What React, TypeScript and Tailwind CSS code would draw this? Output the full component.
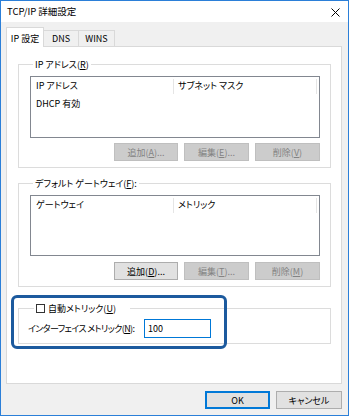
import React from 'react';

type BtnProps = {
  children: React.ReactNode;
  disabled?: boolean;
  isDefault?: boolean;
  width?: 'w-[64px]' | 'w-[65px]' | 'w-[66px]';
};

function WinButton({ children, disabled, isDefault, width = 'w-[65px]' }: BtnProps) {
  const base = 'flex h-[18px] items-center justify-center whitespace-nowrap leading-none';
  const look = disabled
    ? 'border border-[#bfbfbf] bg-[#cccccc] text-[#838383]'
    : isDefault
      ? 'border-2 border-[#0078d7] bg-[#e1e1e1]'
      : 'border border-[#adadad] bg-[#e1e1e1]';
  return <div className={`${base} ${look} ${width}`}>{children}</div>;
}

function ListHeader({ left, right }: { left: string; right: string }) {
  return (
    <div className="flex h-[18px] items-center">
      <div className="flex h-full w-[143px] items-center justify-between pl-[5px]">
        <span>{left}</span>
        <span className="h-[15px] w-px bg-[#e5e5e5]" />
      </div>
      <div className="flex h-full w-[143px] items-center justify-between pl-[4px]">
        <span>{right}</span>
        <span className="h-[15px] w-px bg-[#e5e5e5]" />
      </div>
    </div>
  );
}

export default function App() {
  const groupClass = 'border border-[#dcdcdc] pl-[11px] pr-[10px]';

  return (
    <div className="relative flex h-[416px] w-[349px] flex-col border border-[#2b7fd8] bg-[#f0f0f0] font-['Noto_Sans_CJK_JP','Noto_Sans',sans-serif] text-[9px] text-black [font-feature-settings:'palt']">
      {/* タイトルバー */}
      <div className="flex h-[21px] items-center justify-between bg-white pl-[6px] pr-[8px]">
        <span className="text-[9.5px]">TCP/IP 詳細設定</span>
        <svg width="9" height="9" viewBox="0 0 9 9" className="mt-px">
          <path d="M0.5 0.5 L8.5 8.5 M8.5 0.5 L0.5 8.5" stroke="#000" strokeWidth="1" />
        </svg>
      </div>

      <div className="flex flex-1 flex-col pl-[5px] pr-[6px] pt-[5px]">
        {/* タブ */}
        <div className="flex h-[19px] items-end">
          <div className="relative z-10 -mb-px flex h-[20px] w-[38px] items-center justify-center border-x border-t border-[#d9d9d9] bg-white pt-[2px]">
            IP 設定
          </div>
          <div className="flex h-[16px] w-[35px] items-center justify-center border-r border-t border-[#d9d9d9] bg-[#f0f0f0] pt-px">
            DNS
          </div>
          <div className="flex h-[16px] w-[36px] items-center justify-center border-r border-t border-[#d9d9d9] bg-[#f0f0f0] pt-px">
            WINS
          </div>
        </div>

        {/* タブの中身 */}
        <div className="flex h-[338px] flex-col border border-[#d9d9d9] bg-white pl-[11px] pr-[10px] pt-[11px]">
          <fieldset className={`${groupClass} pb-[6px]`}>
            <legend className="ml-[3px] px-[2px] leading-[13px]">
              IP アドレス(<u>R</u>)
            </legend>
            <div className="mt-[5px] h-[62px] border border-[#828790]">
              <ListHeader left="IP アドレス" right="サブネット マスク" />
              <div className="flex h-[17px] items-center pl-[5px]">DHCP 有効</div>
            </div>
            <div className="mt-[5px] flex justify-end gap-[6px]">
              <WinButton disabled width="w-[64px]">追加(<u>A</u>)...</WinButton>
              <WinButton disabled>編集(<u>E</u>)...</WinButton>
              <WinButton disabled>削除(<u>V</u>)</WinButton>
            </div>
          </fieldset>

          <fieldset className={`${groupClass} mt-[9px] pb-[6px]`}>
            <legend className="ml-[3px] px-[2px] leading-[13px]">
              デフォルト ゲートウェイ(<u>F</u>):
            </legend>
            <div className="mt-[5px] h-[61px] border border-[#828790]">
              <ListHeader left="ゲートウェイ" right="メトリック" />
            </div>
            <div className="mt-[6px] flex justify-end gap-[6px]">
              <WinButton width="w-[64px]">追加(<u>D</u>)...</WinButton>
              <WinButton disabled>編集(<u>T</u>)...</WinButton>
              <WinButton disabled>削除(<u>M</u>)</WinButton>
            </div>
          </fieldset>

          <fieldset className="mt-[15px] border border-[#dcdcdc] pb-[5px] pl-[9px] pr-[10px]">
            <legend className="ml-[6px] flex items-center gap-[3px] pl-[2px] pr-[14px] leading-[13px]">
              <span className="h-[9px] w-[9px] border border-[#333333] bg-white" />
              <span>自動メトリック(<u>U</u>)</span>
            </legend>
            <div className="mt-[4px] flex items-center">
              <span className="w-[116px] shrink-0 whitespace-nowrap tracking-[-0.6px]">
                インターフェイス メトリック(<u>N</u>):
              </span>
              <div className="flex h-[19px] w-[67px] shrink-0 items-center border border-[#0078d7] pl-[3px]">100</div>
            </div>
          </fieldset>
        </div>

        {/* OK / キャンセル */}
        <div className="mt-[7px] flex justify-end gap-[6px]">
          <WinButton isDefault>OK</WinButton>
          <WinButton width="w-[66px]">キャンセル</WinButton>
        </div>
      </div>

      {/* 強調枠 */}
      <div className="pointer-events-none absolute left-[10px] top-[294px] h-[54px] w-[216px] rounded-[6px] border-[3px] border-[#1c5a9e]" />
    </div>
  );
}
